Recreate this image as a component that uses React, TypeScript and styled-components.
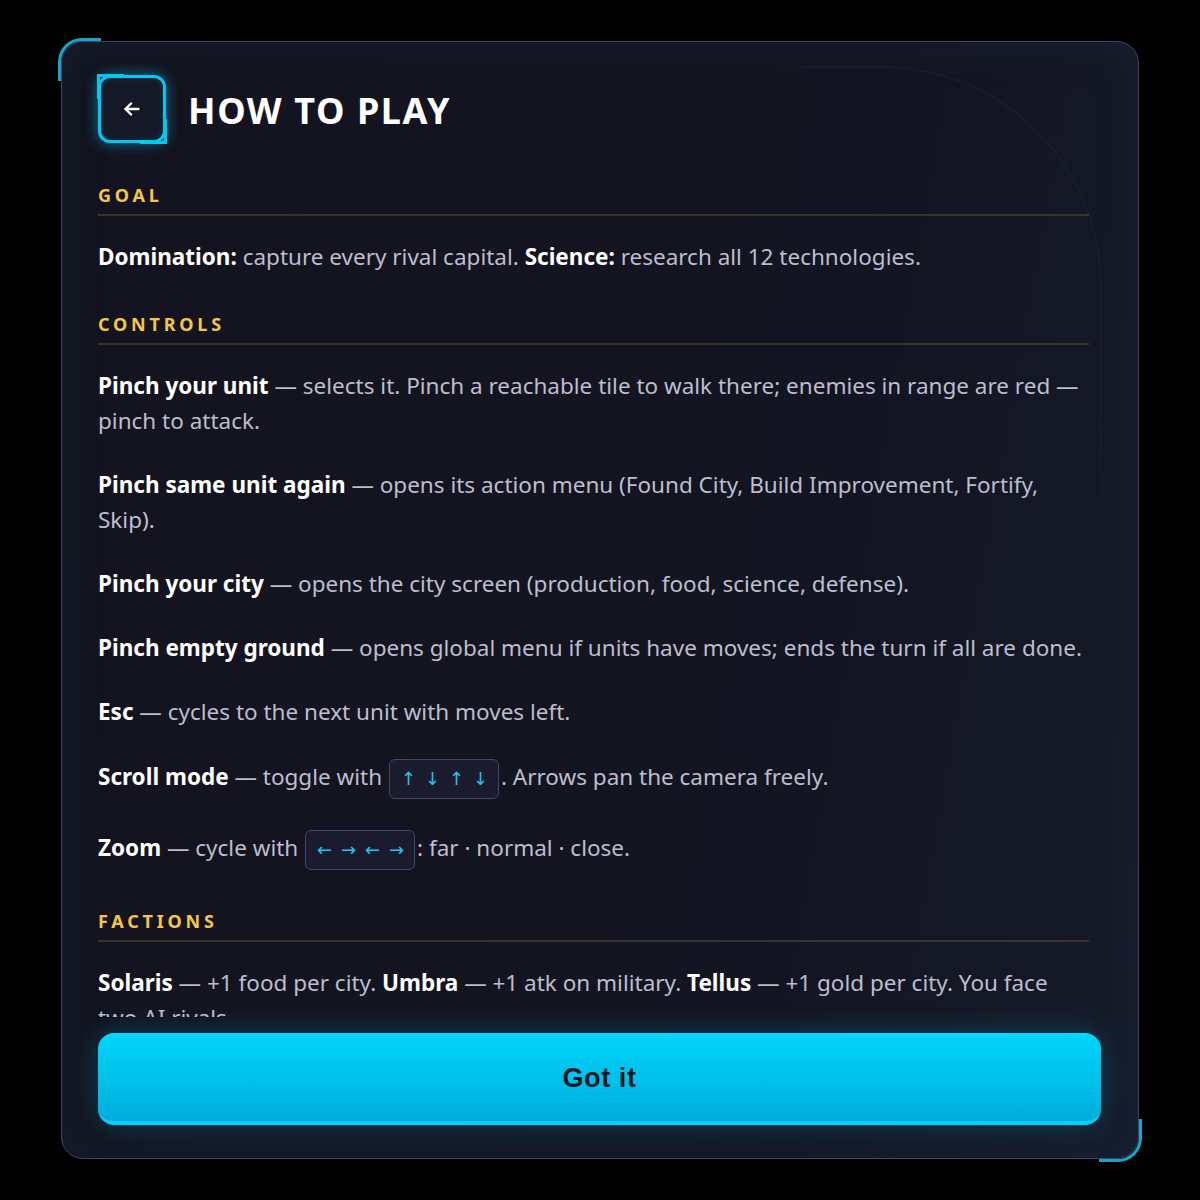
import React from 'react'
import styled, { createGlobalStyle } from 'styled-components'

const GlobalStyle = createGlobalStyle`
  html, body {
    margin: 0;
    padding: 0;
    background: #000;
  }
  * {
    box-sizing: border-box;
  }
`

const Stage = styled.div`
  width: 1200px;
  height: 1200px;
  padding: 41px 61px;
  background: #000;
  font-family: 'Noto Sans', 'Open Sans', sans-serif;
`

const Panel = styled.div`
  position: relative;
  height: 100%;
  display: flex;
  flex-direction: column;
  padding: 33px 37px 33px 36px;
  border: 1.5px solid #45426a;
  border-radius: 22px;
  background: linear-gradient(100deg, #13141f 0%, #141522 70%, #151b29 100%);
  box-shadow: inset 0 0 40px rgba(24, 44, 66, 0.45);

  &::before,
  &::after {
    content: '';
    position: absolute;
    width: 40px;
    height: 40px;
    border: 0 solid #17a6c8;
  }
  &::before {
    top: -4px;
    left: -4px;
    border-top-width: 3px;
    border-left-width: 3px;
    border-top-left-radius: 24px;
  }
  &::after {
    bottom: -4px;
    right: -4px;
    border-bottom-width: 3px;
    border-right-width: 3px;
    border-bottom-right-radius: 24px;
  }
`

const Ring = styled.div`
  position: absolute;
  top: 24px;
  right: 36px;
  width: 300px;
  height: 560px;
  border-top: 2px solid rgba(52, 62, 100, 0.16);
  border-right: 2px solid rgba(52, 62, 100, 0.16);
  border-top-right-radius: 220px;
  pointer-events: none;
  -webkit-mask-image: linear-gradient(225deg, #000 25%, transparent 70%);
  mask-image: linear-gradient(225deg, #000 25%, transparent 70%);
`

const Header = styled.div`
  display: flex;
  align-items: center;
  gap: 22px;
  margin-bottom: 41px;
`

const BackButton = styled.button`
  position: relative;
  width: 68px;
  height: 68px;
  flex: none;
  display: flex;
  align-items: center;
  justify-content: center;
  border: 3px solid #00c9f2;
  border-radius: 12px;
  background: #151826;
  color: #fff;
  box-shadow: 0 0 14px rgba(0, 196, 255, 0.55), inset 0 0 6px rgba(0, 196, 255, 0.2);
  padding: 0;
  cursor: pointer;

  &::before,
  &::after {
    content: '';
    position: absolute;
    width: 24px;
    height: 22px;
    border: 0 solid #00c9f2;
  }
  &::before {
    top: -4px;
    left: -4px;
    border-top-width: 3px;
    border-left-width: 3px;
  }
  &::after {
    bottom: -4px;
    right: -4px;
    border-bottom-width: 3px;
    border-right-width: 3px;
  }
`

const Title = styled.h1`
  margin: 4px 0 0;
  color: #fff;
  font-size: 36px;
  font-weight: 700;
  letter-spacing: 1.6px;
  line-height: 1;
`

const Scroll = styled.div`
  flex: 1;
  min-height: 0;
  overflow: hidden;
  margin-right: 12px;
  margin-bottom: 16px;
`

const SectionTitle = styled.h2<{ $first?: boolean }>`
  margin: ${(p) => (p.$first ? '0' : '39px')} 0 23px;
  padding-bottom: 8px;
  border-bottom: 2px solid #3a3428;
  color: #f6c643;
  font-size: 18px;
  font-weight: 700;
  letter-spacing: 3.8px;
  line-height: 22px;
`

const Para = styled.p`
  margin: 0 0 29px;
  color: #bdbdce;
  font-size: 22.5px;
  line-height: 35px;

  b {
    color: #fff;
    font-weight: 700;
  }
`

const Keys = styled.span`
  display: inline-flex;
  align-items: center;
  gap: 10px;
  height: 40px;
  padding: 0 11px;
  margin: 1px 2px 1px 1px;
  vertical-align: middle;
  border: 1.5px solid #45446a;
  border-radius: 6px;
  background: #1a1c2e;
  color: #22c3ec;
  font-family: 'DejaVu Sans', sans-serif;
  font-size: 18px;
  line-height: 1;
`

const Key = styled.span`
  width: 14px;
  text-align: center;
`

const GotIt = styled.button`
  flex: none;
  height: 92px;
  width: 100%;
  border: 0;
  border-top: 3px solid #00d8ff;
  border-bottom: 4px solid #00d2ff;
  border-radius: 16px;
  background: linear-gradient(180deg, #00d3fb 0%, #00c1ea 50%, #00addb 100%);
  box-shadow: 0 0 28px rgba(0, 190, 240, 0.28);
  color: #0a1622;
  font-family: 'Liberation Sans', Arial, sans-serif;
  font-size: 27px;
  font-weight: 700;
  letter-spacing: 0.6px;
  cursor: pointer;
`

const ArrowLeft = () => (
  <svg width="22" height="22" viewBox="0 0 24 24" fill="none" stroke="currentColor" strokeWidth="2.6" strokeLinecap="round" strokeLinejoin="round">
    <path d="M19 12H5" />
    <path d="M11 6l-6 6 6 6" />
  </svg>
)

const KeySeq = ({ keys }: { keys: string[] }) => (
  <Keys>
    {keys.map((k, i) => (
      <Key key={i}>{k}</Key>
    ))}
  </Keys>
)

export default function App() {
  return (
    <Stage>
      <GlobalStyle />
      <Panel>
        <Ring />
        <Header>
          <BackButton aria-label="Back">
            <ArrowLeft />
          </BackButton>
          <Title>HOW TO PLAY</Title>
        </Header>
        <Scroll>
          <SectionTitle $first>GOAL</SectionTitle>
          <Para>
            <b>Domination:</b> capture every rival capital. <b>Science:</b> research all 12 technologies.
          </Para>

          <SectionTitle>CONTROLS</SectionTitle>
          <Para>
            <b>Pinch your unit</b> — selects it. Pinch a reachable tile to walk there; enemies in range are red — pinch to attack.
          </Para>
          <Para>
            <b>Pinch same unit again</b> — opens its action menu (Found City, Build Improvement, Fortify, Skip).
          </Para>
          <Para>
            <b>Pinch your city</b> — opens the city screen (production, food, science, defense).
          </Para>
          <Para>
            <b>Pinch empty ground</b> — opens global menu if units have moves; ends the turn if all are done.
          </Para>
          <Para>
            <b>Esc</b> — cycles to the next unit with moves left.
          </Para>
          <Para>
            <b>Scroll mode</b> — toggle with <KeySeq keys={['↑', '↓', '↑', '↓']} />. Arrows pan the camera freely.
          </Para>
          <Para>
            <b>Zoom</b> — cycle with <KeySeq keys={['←', '→', '←', '→']} />: far · normal · close.
          </Para>

          <SectionTitle>FACTIONS</SectionTitle>
          <Para>
            <b>Solaris</b> — +1 food per city. <b>Umbra</b> — +1 atk on military. <b>Tellus</b> — +1 gold per city. You face two AI rivals.
          </Para>
        </Scroll>
        <GotIt>Got it</GotIt>
      </Panel>
    </Stage>
  )
}
